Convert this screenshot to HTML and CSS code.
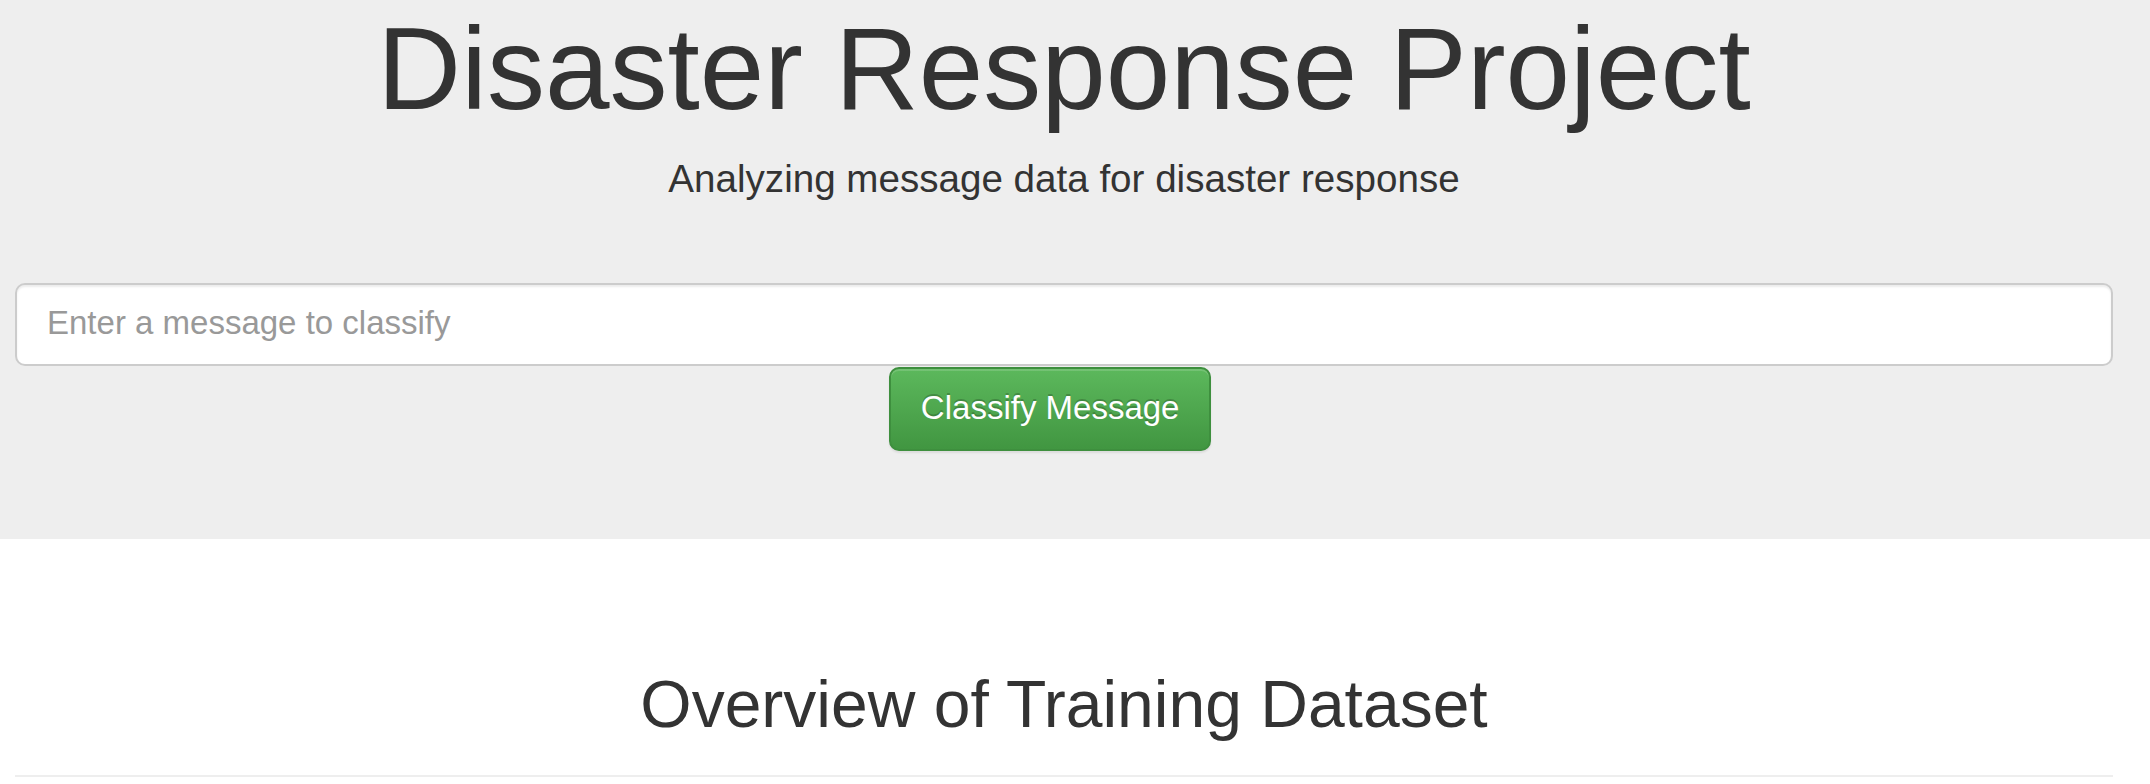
FILE: index.html
```html
<!DOCTYPE html>
<html lang="en">
<head>
<meta charset="utf-8">
<title>Disaster Response Project</title>
<link rel="stylesheet" href="styles.css">
</head>
<body>
<header class="hero">
  <h1 class="hero-title">Disaster Response Project</h1>
  <p class="hero-subtitle">Analyzing message data for disaster response</p>
  <form class="classify-form">
    <input class="message-input" type="text" name="query" placeholder="Enter a message to classify">
    <div class="btn-row">
      <button class="btn-success" type="submit">Classify Message</button>
    </div>
  </form>
</header>
<main class="overview">
  <h2 class="overview-title">Overview of Training Dataset</h2>
  <hr class="divider">
</main>
</body>
</html>
```
FILE: styles.css
```css
html, body {
  margin: 0;
  padding: 0;
}
body {
  font-family: "Liberation Sans", Arial, Helvetica, sans-serif;
  color: #333;
  background: #fff;
}
.hero {
  box-sizing: border-box;
  height: 539px;
  background: #eee;
  padding: 5px 37px 0 15px;
}
.hero-title {
  margin: 0;
  font-size: 116px;
  line-height: 128px;
  font-weight: 400;
  text-align: center;
}
.hero-subtitle {
  margin: 17px 0 0;
  font-size: 38.6px;
  line-height: 57px;
  text-align: center;
}
.classify-form {
  margin: 76px 0 0;
  display: flex;
  flex-direction: column;
}
.message-input {
  box-sizing: border-box;
  width: 100%;
  height: 83px;
  margin: 0;
  padding: 0 30px 3px;
  border: 2px solid #ccc;
  border-radius: 10px;
  background: #fff;
  box-shadow: inset 0 2px 2px rgba(0,0,0,.075);
  font-family: inherit;
  font-size: 33px;
  color: #555;
  outline: none;
}
.message-input::placeholder {
  color: #999;
  opacity: 1;
}
.btn-row {
  display: flex;
  padding-left: 41.6667%;
  margin-top: 1px;
}
.btn-success {
  box-sizing: border-box;
  width: 322px;
  height: 84px;
  padding: 0 0 2px;
  border: 2px solid #3e8f3e;
  border-radius: 10px;
  background-color: #5cb85c;
  background-image: linear-gradient(to bottom, #5cb85c 0%, #419641 100%);
  box-shadow: inset 0 2px 0 rgba(255,255,255,.15), 0 2px 2px rgba(0,0,0,.075);
  color: #fff;
  font-family: inherit;
  font-size: 33px;
  text-align: center;
  text-shadow: 0 -2px 0 rgba(0,0,0,.2);
  cursor: pointer;
}
.overview {
  padding: 0 37px 0 15px;
}
.overview-title {
  margin: 129px 0 0;
  font-size: 66px;
  line-height: 73px;
  font-weight: 400;
  text-align: center;
}
.divider {
  margin: 34px 0 0;
  border: 0;
  border-top: 2px solid #eee;
  height: 0;
}
```
